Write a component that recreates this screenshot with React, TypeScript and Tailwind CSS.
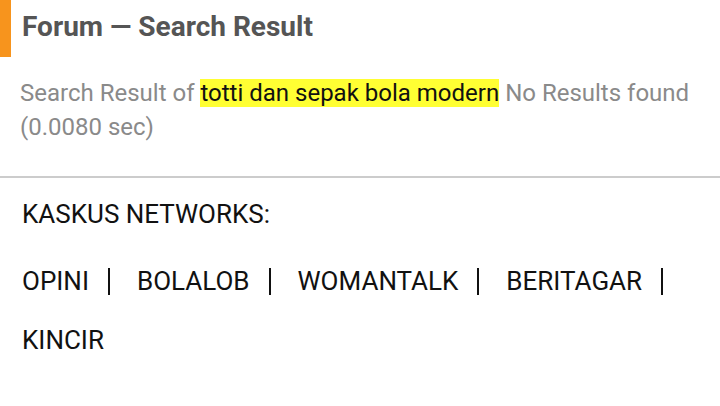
import React from "react";

const NETWORKS = ["OPINI", "BOLALOB", "WOMANTALK", "BERITAGAR", "KINCIR"];

export default function App() {
  return (
    <div className="w-[720px] h-[406px] bg-white overflow-hidden" style={{ fontFamily: "Roboto, 'Liberation Sans', sans-serif" }}>
      {/* Header */}
      <div className="flex h-[57px]">
        <div className="w-[11px] bg-[#f7941d]" />
        <h1 className="pl-[11px] pt-[9px] text-[28px] font-bold text-[#555555] leading-[36px]">
          Forum — Search Result
        </h1>
      </div>
      {/* Result */}
      <div className="px-[20px] pt-[19px] h-[119px] text-[24px] leading-[34px] text-[#8a8a8a]">
        Search Result of <span className="bg-[#ffff33] text-[#111111]">totti dan sepak bola modern</span> No Results found (0.0080 sec)
      </div>
      <div className="h-[2px] bg-[#cccccc]" />
      {/* Networks */}
      <div className="px-[22px] pt-[21px]">
        <div className="text-[26px] leading-[30px] text-[#111111]">KASKUS NETWORKS:</div>
        <div className="flex flex-wrap mt-[23px] text-[26px] leading-[59px] text-[#111111]">
          {NETWORKS.map((n, i) => (
            <div key={n} className="flex items-center">
              <span>{n}</span>
              {i < NETWORKS.length - 1 && <span className="ml-[19px] mr-[27px] h-[27px] w-[2px] bg-[#111111]" />}
            </div>
          ))}
        </div>
      </div>
    </div>
  );
}
